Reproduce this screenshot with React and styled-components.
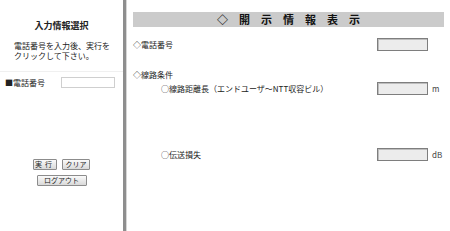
import React from "react";
import styled, { createGlobalStyle } from "styled-components";

const GlobalStyle = createGlobalStyle`
  html, body {
    margin: 0;
    padding: 0;
    background: #fff;
    overflow: hidden;
  }
  body {
    font-family: "Noto Sans CJK JP", "Noto Sans", sans-serif;
    color: #222;
  }
`;

const Page = styled.div`
  display: flex;
  width: 450px;
  height: 231px;
`;

const LeftPane = styled.div`
  width: 123px;
  flex-shrink: 0;
  display: flex;
  flex-direction: column;
`;

const PaneTitle = styled.div`
  margin-top: 20px;
  font-size: 9px;
  line-height: 12px;
  font-weight: bold;
  text-align: center;
`;

const Note = styled.p`
  margin: 9px 0 0;
  padding-left: 14px;
  font-size: 8px;
  line-height: 10px;
`;

const Rule = styled.div`
  margin-top: 10px;
  height: 1px;
  background: #f0f0f0;
`;

const InputRow = styled.div`
  margin-top: 5px;
  display: flex;
  align-items: center;
  padding-left: 5px;
  height: 11px;
  font-size: 8px;
`;

const RowLabel = styled.span`
  width: 56px;
  line-height: 11px;
`;

const TelInput = styled.input`
  box-sizing: border-box;
  width: 54px;
  height: 11px;
  margin: 0;
  padding: 0;
  border: 1px solid #cfcfcf;
  background: #fff;
`;

const ButtonRow = styled.div`
  display: flex;
  justify-content: center;
  gap: 5px;
  margin-top: ${(p) => p.$top}px;
`;

const Button = styled.button`
  box-sizing: border-box;
  width: ${(p) => p.$w}px;
  height: 11px;
  margin: 0;
  padding: 0;
  font-family: "Noto Sans CJK JP", sans-serif;
  font-size: 7px;
  line-height: 9px;
  letter-spacing: ${(p) => p.$spacing || 0}px;
  color: #222;
  border: 1px solid #8c8c8c;
  border-radius: 1px;
  background: linear-gradient(#fafafa, #d9d9d9);
`;

const RightPane = styled.div`
  flex: 1;
  border-left: 3px solid #8e8e8e;
  box-shadow: inset 1px 0 0 #d6d6d6;
  padding: 12px 6px 0 7px;
  display: flex;
  flex-direction: column;
`;

const Banner = styled.div`
  height: 15px;
  background: #cbcbcb;
  text-align: center;
  font-size: 11px;
  line-height: 15px;
  font-weight: bold;
  color: #111;
`;

const Field = styled.div`
  display: grid;
  grid-template-columns: 1fr 51px 16px;
  align-items: center;
  height: 13px;
  margin-top: ${(p) => p.$top}px;
  font-size: 8px;
`;

const FieldLabel = styled.span`
  padding-left: ${(p) => p.$indent || 0}px;
  white-space: nowrap;
`;

const Section = styled.div`
  margin-top: ${(p) => p.$top}px;
  font-size: 8px;
  line-height: 8px;
`;

const ValueBox = styled.input`
  box-sizing: border-box;
  width: 51px;
  height: 13px;
  margin: 0;
  padding: 0;
  border: 1px solid #7e7e7e;
  box-shadow: inset 1px 1px 0 #bdbdbd;
  background: #ececec;
`;

const Unit = styled.span`
  padding-left: 4px;
  font-size: 8px;
  color: #444;
`;

export default function App() {
  return (
    <>
      <GlobalStyle />
      <Page>
        <LeftPane>
          <PaneTitle>入力情報選択</PaneTitle>
          <Note>
            電話番号を入力後、実行を
            <br />
            クリックして下さい。
          </Note>
          <Rule />
          <InputRow>
            <RowLabel>■電話番号</RowLabel>
            <TelInput type="text" />
          </InputRow>
          <ButtonRow $top={71}>
            <Button $w={24} $spacing={3}>実行</Button>
            <Button $w={28}>クリア</Button>
          </ButtonRow>
          <ButtonRow $top={5}>
            <Button $w={50}>ログアウト</Button>
          </ButtonRow>
        </LeftPane>
        <RightPane>
          <Banner>◇　開　示　情　報　表　示</Banner>
          <Field $top={11}>
            <FieldLabel>◇電話番号</FieldLabel>
            <ValueBox readOnly />
            <span />
          </Field>
          <Section $top={20}>◇線路条件</Section>
          <Field $top={3}>
            <FieldLabel $indent={28}>○線路距離長（エンドユーザ～NTT収容ビル）</FieldLabel>
            <ValueBox readOnly />
            <Unit>m</Unit>
          </Field>
          <Field $top={53}>
            <FieldLabel $indent={28}>○伝送損失</FieldLabel>
            <ValueBox readOnly />
            <Unit>dB</Unit>
          </Field>
        </RightPane>
      </Page>
    </>
  );
}
